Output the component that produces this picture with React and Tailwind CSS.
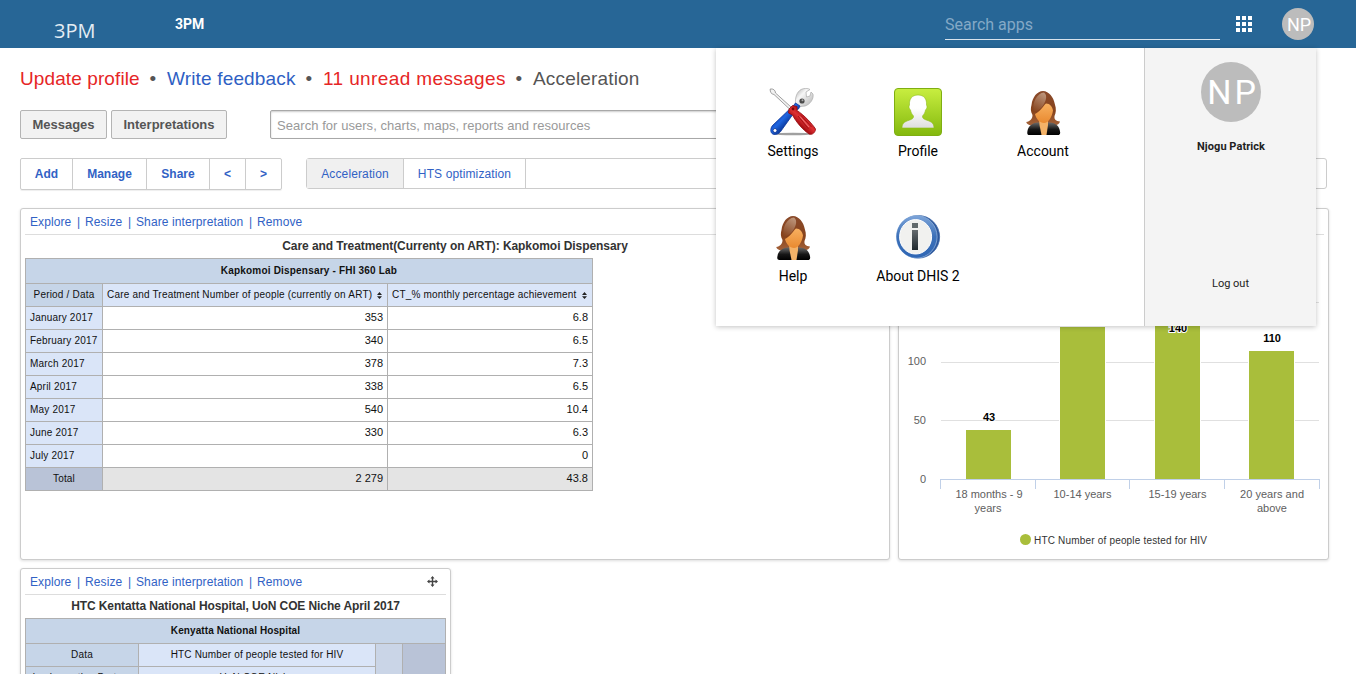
import React from "react";

const rows = [
  ["January 2017", "353", "6.8"],
  ["February 2017", "340", "6.5"],
  ["March 2017", "378", "7.3"],
  ["April 2017", "338", "6.5"],
  ["May 2017", "540", "10.4"],
  ["June 2017", "330", "6.3"],
  ["July 2017", "", "0"],
];

function ToolsIcon() {
  return (
    <svg width="48" height="48" viewBox="0 0 48 48">
      <defs>
        <linearGradient id="blueHandle" x1=".3" y1=".3" x2=".65" y2=".65">
          <stop offset="0" stopColor="#0a3fb4" />
          <stop offset=".45" stopColor="#1f66e0" />
          <stop offset="1" stopColor="#06308f" />
        </linearGradient>
        <linearGradient id="redHandle" x1=".65" y1=".3" x2=".35" y2=".65">
          <stop offset="0" stopColor="#a80d12" />
          <stop offset=".5" stopColor="#df3033" />
          <stop offset="1" stopColor="#a00b10" />
        </linearGradient>
        <linearGradient id="steel" x1="0" y1="0" x2="1" y2="1">
          <stop offset="0" stopColor="#a8a8a8" />
          <stop offset=".35" stopColor="#f6f6f6" />
          <stop offset="1" stopColor="#b0b0b0" />
        </linearGradient>
      </defs>
      <ellipse cx="24" cy="46" rx="18" ry="1.3" fill="#777" opacity=".7" />
      <path d="M26.500 16C26 9 28 4 32 1.500C35 0 39 0 41 1.500L37 4L37.500 9L41 8L42 4L44 6C45 11 41 16.500 36 18C34 18.500 32 18 31 19Z" fill="url(#steel)" stroke="#aaa" strokeWidth=".7" />
      <circle cx="33" cy="13" r="2.600" fill="#4a4a4a" />
      <circle cx="33.500" cy="12.300" r="1" fill="#aaa" />
      <path d="M26.500 15L31 18L29.500 21L27 22L12 43C10 46.500 5 47.500 3 45.500C1 43.500 1.500 39.500 4 37L25 17Z" fill="url(#blueHandle)" stroke="#0a359a" strokeWidth=".8" />
      <circle cx="6" cy="42.500" r="2" fill="#fff" stroke="#0a2f8c" strokeWidth=".8" />
      <path d="M1.200 1C4 .5 6.500 2 6.500 5L22 19L20.500 21L5 6.500C2 6 1 4 1.200 1Z" fill="#f2f2f2" stroke="#8a8a8a" strokeWidth=".8" />
      <path d="M20 21L23.500 17.500L28 18.500L28 22.500C35 27 43.500 36 46.500 41C46.500 44 43.500 47.500 40 46C34 42 27 34 23.500 27L19.500 25Z" fill="url(#redHandle)" stroke="#96090e" strokeWidth=".8" />
      <circle cx="24" cy="21" r="1.400" fill="#7c0509" />
      <path d="M29 28L39.500 41M32 27.500L42.500 39" stroke="#a01014" strokeWidth=".9" />
      <path d="M31 28.500L40 39" stroke="#ef8c8c" strokeWidth=".8" />
    </svg>
  );
}

function ProfileIcon() {
  return (
    <svg width="48" height="48" viewBox="0 0 48 48">
      <defs>
        <linearGradient id="lime" x1="0" y1="0" x2="0" y2="1">
          <stop offset="0" stopColor="#c8ee40" />
          <stop offset="1" stopColor="#83b80d" />
        </linearGradient>
        <linearGradient id="bust" x1="0" y1="0" x2="0" y2="1">
          <stop offset=".4" stopColor="#fff" />
          <stop offset="1" stopColor="#dedede" />
        </linearGradient>
      </defs>
      <rect x=".5" y=".5" width="47" height="47" rx="3.500" fill="url(#lime)" stroke="#7fae12" />
      <path d="M24 7C30 7 33 11 32.500 17C33.500 18 33 21 31.500 22C31 25 30 26 28.500 28C28.500 30 29 30.500 31 31.500C36 33.500 40 34 40 40H8C8 34 12 33.500 17 31.500C19 30.500 19.500 30 19.500 28C18 26 17 25 16.500 22C15 21 14.500 18 15.500 17C15 11 18 7 24 7Z" fill="url(#bust)" stroke="#8fbd1c" strokeWidth=".6" />
    </svg>
  );
}

function WomanIcon() {
  return (
    <svg width="48" height="48" viewBox="0 0 48 48">
      <defs>
        <linearGradient id="hair" x1="0" y1="0" x2="0" y2="1">
          <stop offset="0" stopColor="#8a4a2a" />
          <stop offset=".6" stopColor="#87431c" />
          <stop offset="1" stopColor="#a5633a" />
        </linearGradient>
        <linearGradient id="shine" x1=".7" y1="0" x2=".3" y2="1">
          <stop offset="0" stopColor="#c9a78e" />
          <stop offset="1" stopColor="#8a4a25" />
        </linearGradient>
        <linearGradient id="skin" x1="0" y1="0" x2="0" y2="1">
          <stop offset="0" stopColor="#f7b060" />
          <stop offset="1" stopColor="#e98a30" />
        </linearGradient>
        <linearGradient id="jacket" x1="0" y1="0" x2="0" y2="1">
          <stop offset="0" stopColor="#6a6a6a" />
          <stop offset=".55" stopColor="#161616" />
          <stop offset="1" stopColor="#000" />
        </linearGradient>
      </defs>
      <path d="M24 3C30 3.300 34.500 9 35.800 16C37.500 21 37 25 35.500 28C35 32 37 33 41 33.500C40.500 36.500 37 38 33 37L16 37C12 38 8 37 7.200 34C11 33.500 13.500 31 13.500 27C11.500 24 11.500 20 12.500 17C13.500 9 18 3.300 24 3Z" fill="url(#hair)" />
      <path d="M19 34.500H30.500C37 35 40.500 38 41.200 44.500C41.200 46.500 40 47 39 47H10.500C9 47 8 46.500 8.300 44C9 38 13 35 19 34.500Z" fill="url(#jacket)" />
      <path d="M20 31H29V37L27.500 47H22.500L20.500 37Z" fill="#f3b268" />
      <path d="M16 26C21 24 24 18 27 15.500C31 15.500 33.500 19 34 22.500C33 29 29.500 35 25 35C21 35 17 31 16 26Z" fill="url(#skin)" />
      <path d="M25 4.500C29 7 27 14 22.500 19.500C20 22 15.500 25 14.500 22C13 15 18 5 25 4.500Z" fill="url(#shine)" opacity=".8" />
    </svg>
  );
}

function InfoIcon() {
  return (
    <svg width="48" height="48" viewBox="0 0 48 48">
      <defs>
        <linearGradient id="ring" x1="0" y1="0" x2="0" y2="1">
          <stop offset="0" stopColor="#7ba3d8" />
          <stop offset=".5" stopColor="#3c70b8" />
          <stop offset="1" stopColor="#2f66b4" />
        </linearGradient>
        <linearGradient id="letter" x1="0" y1="0" x2="0" y2="1">
          <stop offset="0" stopColor="#656b6e" />
          <stop offset="1" stopColor="#20292e" />
        </linearGradient>
      </defs>
      <circle cx="24.300" cy="23.800" r="21.300" fill="#2b569b" stroke="#3f68a8" strokeWidth=".8" />
      <ellipse cx="22.800" cy="23.800" rx="20.300" ry="21.200" fill="url(#ring)" stroke="#8fb1dc" strokeWidth=".8" />
      <ellipse cx="21.900" cy="23.800" rx="19.300" ry="20.800" fill="url(#ring)" />
      <ellipse cx="21.600" cy="23.800" rx="16" ry="17.200" fill="#f1f1ef" stroke="#fff" strokeWidth="1" />
      <rect x="18" y="10" width="6" height="5" fill="#626a6c" />
      <rect x="18" y="17" width="6" height="20" fill="url(#letter)" />
    </svg>
  );
}

function Sort() {
  return (
    <svg width="5" height="7" viewBox="0 0 5 7" className="mt-[3px] ml-[5px] shrink-0">
      <path d="M0 3L2.500 0L5 3ZM0 4.200H5L2.500 7Z" fill="#222" />
    </svg>
  );
}

function WidgetLinks({ move }) {
  return (
    <div className="mx-1 flex h-[26px] items-center border-b border-[#dddddd] pl-[5px] text-[12px] tracking-[0.1px] text-[#3162c5]">
      <span className="w-[42px]">Explore</span>
      <span className="w-[13px] text-center">|</span>
      <span className="w-[38px]">Resize</span>
      <span className="w-[13px] text-center">|</span>
      <span className="w-[108px] whitespace-nowrap">Share interpretation</span>
      <span className="w-[13px] text-center">|</span>
      <span>Remove</span>
      {move && (
        <svg width="11" height="11" viewBox="0 0 11 11" className="mr-[8px] ml-auto">
          <path d="M5.500 1V10M1 5.500H10" stroke="#444" strokeWidth="1.400" />
          <path d="M3.500 2.500L5.500 0L7.500 2.500ZM3.500 8.500L5.500 11L7.500 8.500ZM2.500 3.500L0 5.500L2.500 7.500ZM8.500 3.500L11 5.500L8.500 7.500Z" fill="#444" />
        </svg>
      )}
    </div>
  );
}

const panel = "rounded-[3px] border border-[#cccccc] bg-white shadow-[0_1px_3px_#dddddd]";
const cell = "flex items-center border-r border-b border-[#b0b0b0] whitespace-nowrap pb-[2px]";

const bars = [
  { x: 68, top: 222, label: "43", lx: 90, ly: 213 },
  { x: 162, top: 119, label: "", lx: 0, ly: 0 },
  { x: 257, top: 107, label: "140", lx: 279, ly: 124 },
  { x: 351, top: 143, label: "110", lx: 373, ly: 134 },
];

function Chart() {
  return (
    <svg width="429" height="320" viewBox="1 27 429 320" fontFamily="'Liberation Sans', Arial, sans-serif" fontSize="11">
      {[95, 155, 213].map((y) => (
        <path key={y} d={`M43 ${y - 0.5}H421`} stroke="#e0e0e0" />
      ))}
      {bars.map((b) => (
        <g key={b.x}>
          <rect x={b.x - 1} y={b.top - 1} width="47" height={273 - b.top} fill="#fff" />
          <rect x={b.x} y={b.top} width="45" height={271 - b.top} fill="#a9be3b" />
          <text x={b.lx + 1} y={b.ly} textAnchor="middle" fontWeight="bold" stroke="#fff" strokeWidth="2" paintOrder="stroke" fill="#000">{b.label}</text>
        </g>
      ))}
      <path d="M42 271.500H422M42.500 271V281M137.500 271V281M231.500 271V281M326.500 271V281M421.500 271V281" stroke="#c0d0e8" fill="none" />
      <g fill="#606060" textAnchor="end">
        <text x="28" y="157">100</text>
        <text x="28" y="216">50</text>
        <text x="28" y="275">0</text>
      </g>
      <g fill="#606060" textAnchor="middle">
        <text x="91" y="290" textLength="67">18 months - 9</text>
        <text x="90" y="304">years</text>
        <text x="184.500" y="290" textLength="58">10-14 years</text>
        <text x="279.500" y="290" textLength="58">15-19 years</text>
        <text x="374" y="290" textLength="64">20 years and</text>
        <text x="374" y="304">above</text>
      </g>
      <circle cx="127.500" cy="331.500" r="5.500" fill="#a9be3b" />
      <text x="136" y="336" fontSize="10" textLength="173" fill="#333">HTC Number of people tested for HIV</text>
    </svg>
  );
}

const apps = [
  ["Settings", ToolsIcon],
  ["Profile", ProfileIcon],
  ["Account", WomanIcon],
  ["Help", WomanIcon],
  ["About DHIS 2", InfoIcon],
];

function AppMenu() {
  return (
    <div className="absolute top-12 left-[716px] flex h-[278px] w-[600px] bg-white font-['Roboto',sans-serif] shadow-[0_1px_5px_rgba(0,0,0,0.24)]">
      <div className="grid w-[428px] auto-rows-[125px] grid-cols-[125px_125px_125px] content-start pt-10 pl-[14px]">
        {apps.map(([name, Icon]) => (
          <div key={name} className="flex flex-col items-center">
            <Icon />
            <span className="mt-[5px] pl-px text-[14px] leading-5 whitespace-nowrap text-black">{name}</span>
          </div>
        ))}
      </div>
      <div className="flex flex-1 flex-col items-center border-l border-[#cccccc] bg-[#f4f4f4] pt-[14px] text-[11px] text-[#222]">
        <div className="flex size-[60px] items-center justify-center rounded-full bg-[#bcbcbc] pl-[5px] text-[34px] tracking-[3px] text-white">NP</div>
        <div className="mt-[17px] h-4 pl-px leading-4 font-bold tracking-[0.05px]">Njogu Patrick</div>
        <div className="mt-[121px] h-4 leading-4">Log out</div>
      </div>
    </div>
  );
}

export default function App() {
  return (
    <div className="relative h-[674px] w-[1356px] overflow-hidden bg-white font-['Liberation_Sans',Arial,sans-serif]">
      <header className="flex h-12 items-center bg-[#276696] font-['Roboto',sans-serif] text-white">
        <span className="mt-[13px] ml-[54px] w-[121px] font-['Open_Sans',sans-serif] text-[20px] leading-6 text-[#e4edf3]">3PM</span>
        <span className="text-[14px] font-bold">3PM</span>
        <div className="mt-2 ml-auto flex h-[32px] w-[275px] items-center self-start border-b border-[#d8e3ec] pt-[2px] text-[16px] text-[#84a9c6]">Search apps</div>
        <svg width="16" height="16" viewBox="0 0 16 16" className="ml-4" fill="#fff">
          <path d="M0 0h4v4H0zM6 0h4v4H6zM12 0h4v4h-4zM0 6h4v4H0zM6 6h4v4H6zM12 6h4v4h-4zM0 12h4v4H0zM6 12h4v4H6zM12 12h4v4h-4z" />
        </svg>
        <div className="mr-[42px] ml-[30px] flex size-8 items-center justify-center rounded-full bg-[#bcbcbc] pl-[2px] text-[18px]">NP</div>
      </header>

      <main className="pl-5">
        <div className="flex h-[62px] items-center text-[19px] tracking-[0.1px] whitespace-nowrap text-[#555]">
          <span className="w-[119px] text-[#e62626]">Update profile</span>
          <span className="w-7 text-center">•</span>
          <span className="w-[128px] tracking-[0.16px] text-[#2f5fc4]">Write feedback</span>
          <span className="w-7 text-center">•</span>
          <span className="w-[182px] tracking-[0.38px] text-[#e62626]">11 unread messages</span>
          <span className="w-7 text-center">•</span>
          <span className="tracking-[0.16px]">Acceleration</span>
        </div>

        <div className="flex h-[29px] text-[13px]">
          <div className="flex w-[87px] items-center justify-center rounded-[2px] border border-[#b4b4b4] bg-[#f2f2f2] font-bold text-[#555]">Messages</div>
          <div className="ml-1 flex w-[116px] items-center justify-center rounded-[2px] border border-[#b4b4b4] bg-[#f2f2f2] font-bold text-[#555]">Interpretations</div>
          <div className="ml-[43px] flex w-[560px] items-center rounded-[2px] border border-[#a8a8a8] pt-[2px] pl-[6px] tracking-[0.05px] text-[#999] shadow-[inset_0_1px_2px_#cccccc]">Search for users, charts, maps, reports and resources</div>
        </div>

        <div className="mt-[19px] flex items-start text-[12px] text-[#3162c5]">
          <div className="flex h-8 w-[262px] rounded-[2px] border border-[#cccccc] font-bold shadow-[0_1px_1px_#eeeeee] *:flex *:items-center *:justify-center">
            <div className="w-[52px] border-r border-[#cccccc]">Add</div>
            <div className="w-[74px] border-r border-[#cccccc]">Manage</div>
            <div className="w-[63px] border-r border-[#cccccc]">Share</div>
            <div className="w-[36px] border-r border-[#cccccc]">&lt;</div>
            <div className="flex-1">&gt;</div>
          </div>
          <div className="ml-6 flex h-[31px] w-[1021px] rounded-[3px] border border-[#cccccc] tracking-[0.12px] *:flex *:items-center *:justify-center">
            <div className="w-[97px] border-r border-[#cccccc] bg-[#f0f0f0]">Acceleration</div>
            <div className="w-[122px] border-r border-[#cccccc]">HTS optimization</div>
          </div>
        </div>

        <div className="mt-[18px] flex gap-2">
          <section className={`h-[352px] w-[870px] ${panel}`}>
            <WidgetLinks />
            <h2 className="h-[23px] text-center text-[12px] leading-[22px] font-bold tracking-[-0.06px] text-[#333]">Care and Treatment(Currenty on ART): Kapkomoi Dispensary</h2>
            <div className="ml-1 grid w-[568px] auto-rows-[23px] grid-cols-[77px_285px_205px] grid-rows-[25px] border-t border-l border-[#b0b0b0] text-[10px] tracking-[0.19px] text-[#111]">
              <div className={`${cell} col-span-3 justify-center bg-[#c6d5e8] font-bold`}>Kapkomoi Dispensary - FHI 360 Lab</div>
              <div className={`${cell} justify-center bg-[#c6d5e8]`}>Period / Data</div>
              <div className={`${cell} bg-[#dae5f8] pl-1`}>Care and Treatment Number of people (currently on ART)<Sort /></div>
              <div className={`${cell} bg-[#dae5f8] pl-1`}>CT_% monthly percentage achievement<Sort /></div>
              {rows.map(([period, people, pct]) => (
                <React.Fragment key={period}>
                  <div className={`${cell} bg-[#dae5f8] pl-1`}>{period}</div>
                  <div className={`${cell} justify-end pr-1 text-[11px] tracking-normal`}>{people}</div>
                  <div className={`${cell} justify-end pr-1 text-[11px] tracking-normal`}>{pct}</div>
                </React.Fragment>
              ))}
              <div className={`${cell} justify-center bg-[#b9c3d7]`}>Total</div>
              <div className={`${cell} justify-end bg-[#e4e4e4] pr-1 text-[11px] tracking-normal`}>2 279</div>
              <div className={`${cell} justify-end bg-[#e4e4e4] pr-1 text-[11px] tracking-normal`}>43.8</div>
            </div>
          </section>
          <section className={`h-[352px] w-[431px] ${panel}`}>
            <WidgetLinks />
            <Chart />
          </section>
        </div>

        <section className={`mt-2 h-[352px] w-[431px] ${panel}`}>
          <WidgetLinks move />
          <h2 className="h-[23px] text-center text-[12px] leading-[22px] font-bold tracking-[-0.1px] text-[#333]">HTC Kentatta National Hospital, UoN COE Niche April 2017</h2>
          <div className="ml-1 grid w-[421px] auto-rows-[23px] grid-cols-[113px_237px_27px_43px] grid-rows-[25px] border-t border-l border-[#b0b0b0] text-[10px] tracking-[0.17px] text-[#111]">
            <div className={`${cell} col-span-4 justify-center bg-[#c6d5e8] font-bold tracking-[0.1px]`}>Kenyatta National Hospital</div>
            <div className={`${cell} justify-center bg-[#c6d5e8]`}>Data</div>
            <div className={`${cell} justify-center bg-[#dae5f8]`}>HTC Number of people tested for HIV</div>
            <div className={`${cell} row-span-2 bg-[#cad5e7]`} />
            <div className={`${cell} row-span-2 bg-[#b9c3d7]`} />
            <div className={`${cell} justify-center bg-[#c6d5e8]`}>Implementing Partner</div>
            <div className={`${cell} justify-center bg-[#dae5f8]`}>UoN COE Niche</div>
          </div>
        </section>
      </main>

      <AppMenu />
    </div>
  );
}
